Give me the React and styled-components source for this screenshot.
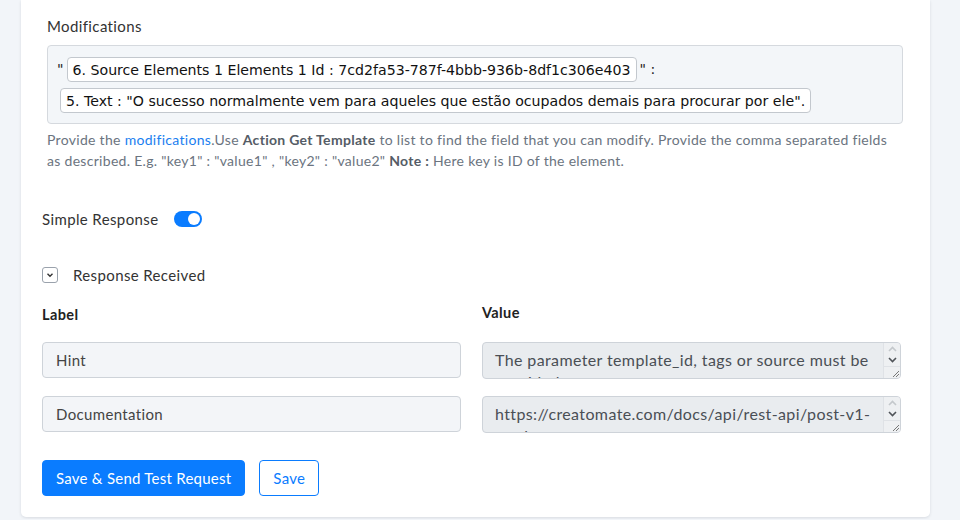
import { Fragment } from "react";
import styled, { createGlobalStyle } from "styled-components";

const GlobalStyle = createGlobalStyle`
  html, body {
    margin: 0;
    background: #f2f5f9;
  }
  body {
    font-family: Lato, "Liberation Sans", sans-serif;
    letter-spacing: 0.38px;
    color: #333;
  }
`;

const Page = styled.div`
  padding: 0 30px 2px 21px;
`;

const Card = styled.div`
  background: #fff;
  border-radius: 0 0 5px 5px;
  box-shadow: 0 1px 3px rgba(30, 40, 60, 0.12);
  padding: 17px 27px 21px 21px;
`;

const ModSection = styled.div`
  padding-left: 5px;
`;

const FieldTitle = styled.div`
  font-size: 15px;
  line-height: 18px;
  color: #333;
  margin-bottom: 10px;
`;

const ModBox = styled.div`
  background: #f3f6f9;
  border: 1px solid #d5d9de;
  border-radius: 4px;
  padding: 11px 10px 10px 12px;
  display: flex;
  flex-wrap: wrap;
  align-items: center;
  column-gap: 3px;
  row-gap: 6px;
  font-family: "DejaVu Sans", Verdana, sans-serif;
  font-size: 14.15px;
  letter-spacing: 0;
  color: #222;
`;

const Quote = styled.span`
  line-height: 25px;
  margin-left: ${(p) => p.$shift || 0}px;
`;

const Chip = styled.span`
  display: inline-block;
  height: 25px;
  line-height: 24px;
  box-sizing: border-box;
  background: #fff;
  border: 1px solid #c3c8ce;
  border-radius: 4px;
  padding: 0 5px;
  color: #111;
  white-space: nowrap;
`;

const Help = styled.p`
  margin: 5px 0 0;
  font-size: 14px;
  letter-spacing: 0.3px;
  line-height: 21px;
  color: #6b7480;

  a {
    color: #1a7ef0;
    text-decoration: none;
  }
  b {
    color: #555c66;
  }
`;

const ToggleRow = styled.div`
  display: flex;
  align-items: center;
  gap: 16px;
  margin-top: 39px;
  font-size: 15px;
`;

const Switch = styled.span`
  position: relative;
  width: 28px;
  height: 16px;
  border-radius: 8px;
  background: ${(p) => (p.$on ? "#0a7cff" : "#c8ced6")};

  &::after {
    content: "";
    position: absolute;
    top: 2px;
    left: ${(p) => (p.$on ? 14 : 2)}px;
    width: 12px;
    height: 12px;
    border-radius: 50%;
    background: #fff;
  }
`;

const CollapseRow = styled.div`
  display: flex;
  align-items: center;
  gap: 15px;
  margin-top: 38px;
  font-size: 15px;
`;

const Caret = styled.span`
  display: flex;
  align-items: center;
  justify-content: center;
  width: 16px;
  height: 16px;
  box-sizing: border-box;
  border: 1px solid #9aa2ac;
  border-radius: 3px;
  color: #333;
`;

const Grid = styled.div`
  display: grid;
  grid-template-columns: 1fr 1fr;
  column-gap: 21px;
  row-gap: 17px;
  margin-top: 20px;
  margin-right: 2px;
  align-items: start;
`;

const ColHead = styled.div`
  align-self: end;
  font-size: 14.5px;
  font-weight: 700;
  color: #222;
  line-height: 18px;
  margin-bottom: ${(p) => p.$mb}px;
`;

const Input = styled.input`
  display: block;
  width: 100%;
  height: 36px;
  box-sizing: border-box;
  background: #f3f5f8;
  border: 1px solid #ced3d9;
  border-radius: 4px;
  padding: 0 13px;
  font-family: Lato, "Liberation Sans", sans-serif;
  font-size: 15px;
  letter-spacing: 0.35px;
  color: #444;
  outline: none;
`;

const AreaWrap = styled.div`
  position: relative;
  height: 37px;
`;

const Area = styled.textarea`
  display: block;
  width: 100%;
  height: 37px;
  box-sizing: border-box;
  background: #e9ecef;
  border: 1px solid #ced3d9;
  border-radius: 4px;
  padding: 6px 18px 0 12px;
  font-family: Lato, "Liberation Sans", sans-serif;
  font-size: 16px;
  letter-spacing: 0.38px;
  line-height: 22px;
  color: #4a4f55;
  overflow: hidden;
  resize: none;
  outline: none;
`;

/* classic scrollbar column drawn over the textarea's right edge */
const ScrollBar = styled.div`
  position: absolute;
  top: 1px;
  right: 1px;
  bottom: 1px;
  width: 16px;
  background: #eef0f2;
  border-left: 1px solid #dfe2e6;
  border-radius: 0 3px 3px 0;
  display: flex;
  flex-direction: column;
  align-items: center;
`;

const ArrowCell = styled.div`
  height: 12px;
  width: 100%;
  display: flex;
  align-items: center;
  justify-content: center;
`;

const Grip = styled.div`
  margin-top: auto;
  width: 100%;
  height: 11px;
  border-top: 1px solid #dfe2e6;
  display: flex;
  justify-content: flex-end;
  align-items: flex-end;
`;

const Actions = styled.div`
  display: flex;
  gap: 14px;
  margin-top: 27px;
`;

const Button = styled.button`
  height: 36px;
  box-sizing: border-box;
  border-radius: 4px;
  padding: 0 13px;
  font-family: Lato, "Liberation Sans", sans-serif;
  font-size: 15px;
  letter-spacing: 0.25px;
  border: 1px solid #0a7cff;
  background: ${(p) => (p.$primary ? "#0a7cff" : "#fff")};
  color: ${(p) => (p.$primary ? "#fff" : "#0a7cff")};
`;

const rows = [
  {
    label: "Hint",
    value: "The parameter template_id, tags or source must be provided.",
  },
  {
    label: "Documentation",
    value: "https://creatomate.com/docs/api/rest-api/post-v1-renders",
  },
];

function Chevron({ up, color }) {
  return (
    <svg width="9" height="6" viewBox="0 0 9 6">
      <path
        d={up ? "M1 5 L4.5 1.5 L8 5" : "M1 1 L4.5 4.5 L8 1"}
        fill="none"
        stroke={color}
        strokeWidth="1.6"
      />
    </svg>
  );
}

function ValueArea({ value }) {
  return (
    <AreaWrap>
      <Area readOnly value={value} />
      <ScrollBar>
        <ArrowCell>
          <Chevron up color="#c4c8cc" />
        </ArrowCell>
        <ArrowCell>
          <Chevron color="#505459" />
        </ArrowCell>
        <Grip>
          <svg width="10" height="10" viewBox="0 0 10 10">
            <path d="M9 3 L3 9 M9 6 L6 9" stroke="#777" strokeWidth="1" />
          </svg>
        </Grip>
      </ScrollBar>
    </AreaWrap>
  );
}

export default function App() {
  return (
    <>
      <GlobalStyle />
      <Page>
        <Card>
          <ModSection>
            <FieldTitle>Modifications</FieldTitle>
            <ModBox>
              <Quote $shift={-3}>"</Quote>
              <Chip>6. Source Elements 1 Elements 1 Id : 7cd2fa53-787f-4bbb-936b-8df1c306e403</Chip>
              <Quote>" :</Quote>
              <Chip>5. Text : "O sucesso normalmente vem para aqueles que estão ocupados demais para procurar por ele".</Chip>
            </ModBox>
            <Help>
              Provide the <a href="#">modifications</a>.Use <b>Action Get Template</b> to list to find the
              field that you can modify. Provide the comma separated fields as described. E.g. "key1" :
              "value1" , "key2" : "value2" <b>Note :</b> Here key is ID of the element.
            </Help>
          </ModSection>

          <ToggleRow>
            Simple Response
            <Switch $on />
          </ToggleRow>

          <CollapseRow>
            <Caret>
              <svg width="10" height="10" viewBox="0 0 10 10">
                <path d="M2.5 3.8 L5 6.3 L7.5 3.8" fill="none" stroke="#333" strokeWidth="1.4" />
              </svg>
            </Caret>
            Response Received
          </CollapseRow>

          <Grid>
            <ColHead $mb={1}>Label</ColHead>
            <ColHead $mb={3}>Value</ColHead>
            {rows.map((r) => (
              <Fragment key={r.label}>
                <Input readOnly value={r.label} />
                <ValueArea value={r.value} />
              </Fragment>
            ))}
          </Grid>

          <Actions>
            <Button $primary>Save &amp; Send Test Request</Button>
            <Button>Save</Button>
          </Actions>
        </Card>
      </Page>
    </>
  );
}
